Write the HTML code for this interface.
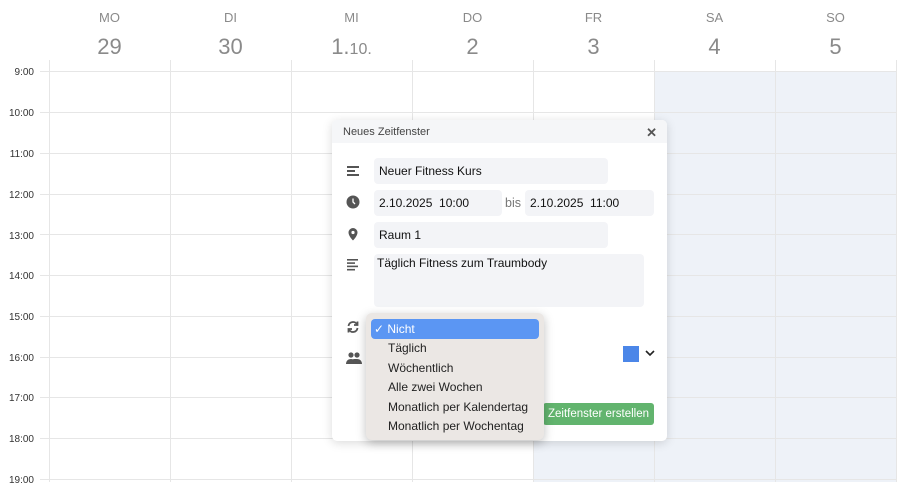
<!DOCTYPE html>
<html><head><meta charset="utf-8"><style>
body{margin:0;width:900px;height:482px;background:#fff;font-family:"Liberation Sans",Arial,sans-serif;position:relative;overflow:hidden}
.abs{position:absolute}
.day{position:absolute;width:121px;text-align:center;color:#8a8a8a}
.day .n{font-size:13px;top:10px;position:absolute;width:100%}
.day .d{font-size:22px;top:34px;position:absolute;width:100%}
.hl{position:absolute;left:40px;right:4px;height:1px;background:#e6e6e6}
.vl{position:absolute;top:60px;bottom:0;width:1px;background:#e6e6e6}
.t{position:absolute;right:866px;font-size:10px;color:#333;text-align:right;width:40px}
.inp{position:absolute;background:#f3f4f7;border-radius:4px;font-size:12px;color:#111;line-height:26px;padding-left:5px;box-sizing:border-box}
.ic{position:absolute;left:346px}
.opt{position:absolute;left:22px;font-size:12px;color:#222}
</style></head><body>
<div class="abs" style="left:654px;top:72px;width:242px;height:410px;background:#eef2f8"></div>
<div class="abs" style="left:533px;top:440px;width:121px;height:42px;background:#eef2f8"></div>

<div class="day" style="left:49px"><div class="n">MO</div><div class="d">29</div></div>
<div class="day" style="left:170px"><div class="n">DI</div><div class="d">30</div></div>
<div class="day" style="left:291px"><div class="n">MI</div><div class="d">1.<span style="font-size:16px">10.</span></div></div>
<div class="day" style="left:412px"><div class="n">DO</div><div class="d">2</div></div>
<div class="day" style="left:533px"><div class="n">FR</div><div class="d">3</div></div>
<div class="day" style="left:654px"><div class="n">SA</div><div class="d">4</div></div>
<div class="day" style="left:775px"><div class="n">SO</div><div class="d">5</div></div>

<div class="vl" style="left:49px"></div><div class="vl" style="left:170px"></div><div class="vl" style="left:291px"></div><div class="vl" style="left:412px"></div><div class="vl" style="left:533px"></div><div class="vl" style="left:654px"></div><div class="vl" style="left:775px"></div><div class="vl" style="left:896px"></div>

<div class="hl" style="top:71px"></div><div class="hl" style="top:112px"></div><div class="hl" style="top:153px"></div><div class="hl" style="top:194px"></div><div class="hl" style="top:234px"></div><div class="hl" style="top:275px"></div><div class="hl" style="top:316px"></div><div class="hl" style="top:357px"></div><div class="hl" style="top:397px"></div><div class="hl" style="top:438px"></div><div class="hl" style="top:479px"></div>

<div class="t" style="top:67px">9:00</div><div class="t" style="top:108px">10:00</div><div class="t" style="top:149px">11:00</div><div class="t" style="top:190px">12:00</div><div class="t" style="top:231px">13:00</div><div class="t" style="top:271px">14:00</div><div class="t" style="top:312px">15:00</div><div class="t" style="top:353px">16:00</div><div class="t" style="top:393px">17:00</div><div class="t" style="top:434px">18:00</div><div class="t" style="top:475px">19:00</div>

<!-- dialog -->
<div class="abs" style="left:332px;top:120px;width:335px;height:321px;background:#fff;border-radius:5px;box-shadow:0 2px 10px rgba(0,0,0,.15);overflow:hidden">
 <div style="height:23px;background:#f5f6f8;font-size:11px;color:#444;line-height:24px;padding-left:11px">Neues Zeitfenster<span style="position:absolute;right:10px;top:1px;font-size:13px;color:#555;font-weight:bold">✕</span></div>
</div>
<div class="inp" style="left:374px;top:158px;width:234px">Neuer Fitness Kurs</div>
<div class="inp" style="left:374px;top:190px;width:128px">2.10.2025&nbsp; 10:00</div>
<div class="abs" style="left:505px;top:196px;font-size:12.5px;color:#777">bis</div>
<div class="inp" style="left:525px;top:190px;width:129px">2.10.2025&nbsp; 11:00</div>
<div class="inp" style="left:374px;top:222px;width:234px">Raum 1</div>
<div class="inp" style="left:374px;top:254px;width:270px;height:53px;line-height:18px;padding-left:3px">Täglich Fitness zum Traumbody</div>

<svg class="ic" style="top:164px" width="14" height="14" viewBox="0 0 14 14" fill="#555"><rect x="1" y="2" width="12" height="2"/><rect x="1" y="6" width="8" height="2"/><rect x="1" y="10" width="12" height="2"/></svg>
<svg class="ic" style="top:195px" width="14" height="14" viewBox="0 0 14 14"><circle cx="7" cy="7" r="6.5" fill="#555"/><path d="M7 3.5V7l2 2" stroke="#fff" stroke-width="1.3" fill="none"/></svg>
<svg class="ic" style="top:227px" width="14" height="14" viewBox="0 0 14 14"><path d="M7 1a4.5 4.5 0 0 0-4.5 4.5C2.5 9 7 13.5 7 13.5S11.5 9 11.5 5.5A4.5 4.5 0 0 0 7 1z" fill="#555"/><circle cx="7" cy="5.5" r="1.6" fill="#fff"/></svg>
<svg class="ic" style="top:258px" width="14" height="14" viewBox="0 0 14 14" fill="#555"><rect x="1" y="1" width="11" height="1.6"/><rect x="1" y="4.3" width="8" height="1.6"/><rect x="1" y="7.6" width="11" height="1.6"/><rect x="1" y="10.9" width="8" height="1.6"/></svg>
<svg class="ic" style="top:320px" width="14" height="14" viewBox="0 0 14 14" fill="none" stroke="#555" stroke-width="1.8"><path d="M2.5 6A4.5 4.5 0 0 1 11 4.5"/><path d="M11.5 8A4.5 4.5 0 0 1 3 9.5"/><path d="M11.5 1.5v3.5H8" /><path d="M2.5 12.5V9H6"/></svg>
<svg class="ic" style="top:351px" width="16" height="14" viewBox="0 0 16 14" fill="#555"><circle cx="5" cy="4" r="2.6"/><circle cx="11" cy="4" r="2.6"/><path d="M0 13c0-3 2-5 5-5s5 2 5 5z"/><path d="M8 13c0-2 0-3.5-1-4.7C8 7.9 9.5 8 11 8c3 0 5 2 5 5z"/></svg>

<div class="abs" style="left:623px;top:346px;width:16px;height:16px;background:#4b86e8"></div>
<svg class="abs" style="left:645px;top:350px" width="10" height="7" viewBox="0 0 10 7"><path d="M1 1l4 4 4-4" stroke="#222" stroke-width="1.6" fill="none"/></svg>

<div class="abs" style="left:543px;top:403px;width:111px;height:22px;background:#62b46e;border-radius:3px;color:#fff;font-size:11.5px;line-height:22px;text-align:center">Zeitfenster erstellen</div>

<!-- dropdown -->
<div class="abs" style="left:366px;top:313px;width:178px;height:127px;background:#ebe7e4;border-radius:6px;box-shadow:0 3px 10px rgba(0,0,0,.25)">
 <div class="abs" style="left:5px;top:6px;width:168px;height:20px;background:#5b96f3;border-radius:4px"></div>
 <div class="opt" style="top:9px;color:#fff;left:8px">✓ Nicht</div>
 <div class="opt" style="top:28px">Täglich</div>
 <div class="opt" style="top:48px">Wöchentlich</div>
 <div class="opt" style="top:67px">Alle zwei Wochen</div>
 <div class="opt" style="top:87px">Monatlich per Kalendertag</div>
 <div class="opt" style="top:106px">Monatlich per Wochentag</div>
</div>
</body></html>
